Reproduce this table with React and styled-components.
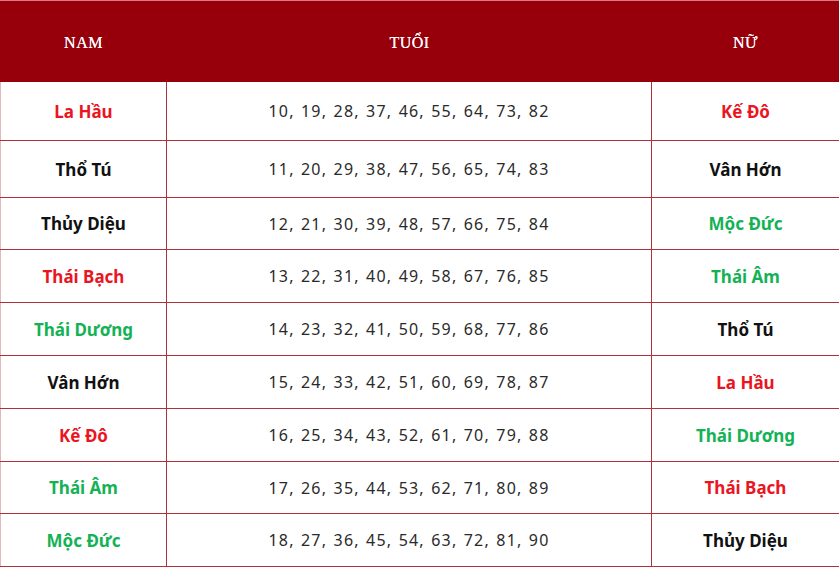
import styled, { createGlobalStyle } from "styled-components";

const GlobalStyle = createGlobalStyle`
  html, body {
    margin: 0;
    padding: 0;
    background: #fff;
  }
`;

const Table = styled.div`
  width: 839px;
  display: flex;
  flex-direction: column;
  font-family: "Noto Sans", "Open Sans", sans-serif;
`;

const Head = styled.div`
  display: grid;
  grid-template-columns: 167px 485px 1fr;
  height: 82px;
  background: #97000b;
  border-top: 1px solid #d77c84;
  box-sizing: border-box;
`;

const HeadCell = styled.div`
  display: flex;
  align-items: center;
  justify-content: center;
  color: #fff;
  font-family: "Liberation Serif", serif;
  font-size: 16px;
  letter-spacing: 0.5px;
  text-shadow: 0 0 0.4px #fff;
  padding-top: 3px;
`;

const Row = styled.div`
  display: grid;
  grid-template-columns: 167px 485px 1fr;
  height: ${(p) => p.$h}px;
  border-bottom: 1px solid #b0303c;
  box-sizing: border-box;
`;

const Cell = styled.div`
  display: flex;
  align-items: center;
  justify-content: center;
  border-right: ${(p) => (p.$last ? "none" : "1px solid #b0303c")};
  border-left: ${(p) => (p.$first ? "1px solid #e2b8bc" : "none")};
`;

const Name = styled.span`
  font-size: 17px;
  font-weight: 700;
  color: ${(p) => p.$c};
`;

const Ages = styled.span`
  font-size: 16px;
  color: #2a2a2a;
  letter-spacing: 1.2px;
  word-spacing: 1px;
`;

const RED = "#ea1522";
const GREEN = "#14b255";
const BLACK = "#111";

const rows = [
  { h: 59, nam: ["La Hầu", RED], ages: "10, 19, 28, 37, 46, 55, 64, 73, 82", nu: ["Kế Đô", RED] },
  { h: 57, nam: ["Thổ Tú", BLACK], ages: "11, 20, 29, 38, 47, 56, 65, 74, 83", nu: ["Vân Hớn", BLACK] },
  { h: 52, nam: ["Thủy Diệu", BLACK], ages: "12, 21, 30, 39, 48, 57, 66, 75, 84", nu: ["Mộc Đức", GREEN] },
  { h: 53, nam: ["Thái Bạch", RED], ages: "13, 22, 31, 40, 49, 58, 67, 76, 85", nu: ["Thái Âm", GREEN] },
  { h: 53, nam: ["Thái Dương", GREEN], ages: "14, 23, 32, 41, 50, 59, 68, 77, 86", nu: ["Thổ Tú", BLACK] },
  { h: 53, nam: ["Vân Hớn", BLACK], ages: "15, 24, 33, 42, 51, 60, 69, 78, 87", nu: ["La Hầu", RED] },
  { h: 53, nam: ["Kế Đô", RED], ages: "16, 25, 34, 43, 52, 61, 70, 79, 88", nu: ["Thái Dương", GREEN] },
  { h: 52, nam: ["Thái Âm", GREEN], ages: "17, 26, 35, 44, 53, 62, 71, 80, 89", nu: ["Thái Bạch", RED] },
  { h: 53, nam: ["Mộc Đức", GREEN], ages: "18, 27, 36, 45, 54, 63, 72, 81, 90", nu: ["Thủy Diệu", BLACK] },
];

export default function App() {
  return (
    <>
      <GlobalStyle />
      <Table>
        <Head>
          <HeadCell>NAM</HeadCell>
          <HeadCell>TUỔI</HeadCell>
          <HeadCell>NỮ</HeadCell>
        </Head>
        {rows.map((r, i) => (
          <Row key={i} $h={r.h}>
            <Cell $first>
              <Name $c={r.nam[1]}>{r.nam[0]}</Name>
            </Cell>
            <Cell>
              <Ages>{r.ages}</Ages>
            </Cell>
            <Cell $last>
              <Name $c={r.nu[1]}>{r.nu[0]}</Name>
            </Cell>
          </Row>
        ))}
      </Table>
    </>
  );
}
